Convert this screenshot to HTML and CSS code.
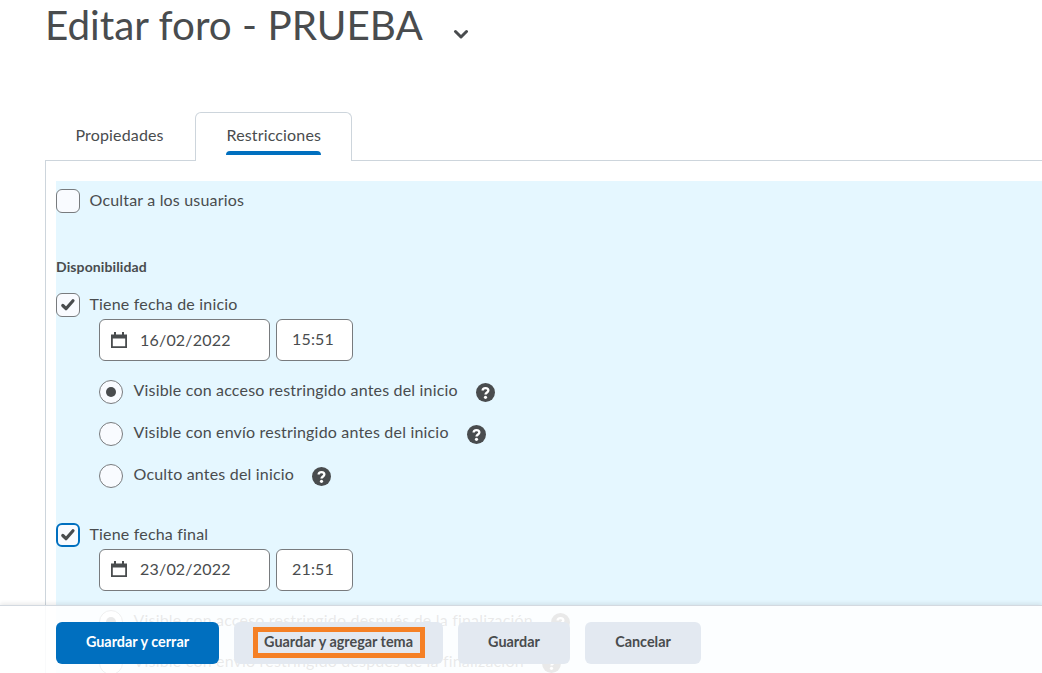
FILE: index.html
```html
<!DOCTYPE html>
<html lang="es">
<head>
<meta charset="utf-8">
<title>Editar foro - PRUEBA</title>
<link rel="stylesheet" href="styles.css">
</head>
<body>
<div class="page">
  <header class="head">
    <h1>Editar foro - PRUEBA</h1>
    <svg class="chev" width="16" height="10" viewBox="0 0 16 10"><path d="M2.500 2.500 8 8l5.500-5.500" fill="none" stroke="#494c4e" stroke-width="3" stroke-linecap="round" stroke-linejoin="round"/></svg>
  </header>
  <nav class="tabs">
    <div class="tab">Propiedades</div>
    <div class="tab active"><span>Restricciones</span><i></i></div>
  </nav>
  <main class="panel">
    <div class="blue">
      <label class="check first"><span class="box"></span>Ocultar a los usuarios</label>
      <h2>Disponibilidad</h2>
      <label class="check"><span class="box"><svg width="16" height="14" viewBox="0 0 16 14"><path d="M2.800 7.500 6 10.700l7-8" fill="none" stroke="#494c4e" stroke-width="3.200" stroke-linecap="round" stroke-linejoin="round"/></svg></span>Tiene fecha de inicio</label>
      <div class="dates">
        <div class="input date"><svg width="16" height="16" viewBox="0 0 16 16"><path d="M0 2.500h16V16H0z M1.800 6.500v7.700h12.400V6.500z" fill="#494c4e" fill-rule="evenodd"/><path d="M3 0h2v3H3zM11 0h2v3h-2z" fill="#494c4e"/></svg>16/02/2022</div>
        <div class="input time">15:51</div>
      </div>
      <div class="radios">
        <div class="radio"><span class="dot on"></span>Visible con acceso restringido antes del inicio<svg class="help" width="19" height="19" viewBox="0 0 18 18"><use href="#q"/></svg></div>
        <div class="radio"><span class="dot"></span>Visible con envío restringido antes del inicio<svg class="help" width="19" height="19" viewBox="0 0 18 18"><use href="#q"/></svg></div>
        <div class="radio last"><span class="dot"></span>Oculto antes del inicio<svg class="help" width="19" height="19" viewBox="0 0 18 18"><use href="#q"/></svg></div>
      </div>
      <label class="check second"><span class="box focus"><svg width="16" height="14" viewBox="0 0 16 14"><path d="M2.800 7.500 6 10.700l7-8" fill="none" stroke="#494c4e" stroke-width="3.200" stroke-linecap="round" stroke-linejoin="round"/></svg></span>Tiene fecha final</label>
      <div class="dates">
        <div class="input date"><svg width="16" height="16" viewBox="0 0 16 16"><path d="M0 2.500h16V16H0z M1.800 6.500v7.700h12.400V6.500z" fill="#494c4e" fill-rule="evenodd"/><path d="M3 0h2v3H3zM11 0h2v3h-2z" fill="#494c4e"/></svg>23/02/2022</div>
        <div class="input time">21:51</div>
      </div>
      <div class="radios">
        <div class="radio"><span class="dot on"></span>Visible con acceso restringido después de la finalización<svg class="help" width="19" height="19" viewBox="0 0 18 18"><use href="#q"/></svg></div>
        <div class="radio"><span class="dot"></span>Visible con envío restringido después de la finalización<svg class="help" width="19" height="19" viewBox="0 0 18 18"><use href="#q"/></svg></div>
      </div>
    </div>
  </main>
  <footer class="bar">
    <button class="btn primary">Guardar y cerrar</button>
    <button class="btn wide"><span class="mark"></span>Guardar y agregar tema</button>
    <button class="btn save">Guardar</button>
    <button class="btn cancel">Cancelar</button>
  </footer>
</div>
<svg class="defs" width="0" height="0"><defs><g id="q"><circle cx="9" cy="9" r="9" fill="#494c4e"/><path d="M6.300 7.200C6.300 5.700 7.500 4.800 9 4.800s2.700.9 2.700 2.300c0 1.900-2.700 2-2.700 3.900" fill="none" stroke="#fff" stroke-width="2.200"/><circle cx="9" cy="13.600" r="1.500" fill="#fff"/></g></defs></svg>
</body>
</html>
```
FILE: styles.css
```css
* { box-sizing: border-box; }
html, body { margin: 0; height: 100%; overflow: hidden; background: #fff; }
body { font-family: Lato, "Open Sans", sans-serif; color: #494c4e; }
.page { position: relative; width: 1042px; height: 673px; overflow: hidden; }
.defs { position: absolute; }

.head { display: flex; align-items: flex-start; height: 112px; padding-left: 45px; }
h1 { margin: 0; font-size: 40.400px; font-weight: 400; line-height: 49px; }
.chev { margin: 29px 0 0 30px; }

.tabs { display: flex; height: 49px; padding-left: 46px; margin-bottom: -1px; position: relative; z-index: 1; }
.tab { font-size: 16px; line-height: 20px; padding: 13px 30px 0 29.500px; width: 149px; letter-spacing: .15px; }
.tab.active { width: 157px; background: #fff; border: 1px solid #cdd5dc; border-bottom: 0; border-radius: 6px 6px 0 0; padding: 12px 30px 0 30.500px; }
.tab span { display: block; white-space: nowrap; }
.tab i { display: block; height: 4px; margin: 6px 0 0 -.5px; width: 95px; background: #006fbf; border-radius: 4px 4px 0 0; }

.panel { margin-left: 45px; padding: 20px 0 0 10px; border-top: 1px solid #cdd5dc; border-left: 1px solid #cdd5dc; height: 600px; }
.blue { background: #e5f7ff; height: 560px; padding-top: 8px; }

.check { display: flex; align-items: flex-start; font-size: 16px; line-height: 22px; letter-spacing: .18px; }
.box { flex: none; display: flex; align-items: center; justify-content: center; width: 24px; height: 24px; margin-right: 9.500px; background: #f9fbff; border: 1px solid #787b7e; border-radius: 6px; }
.box.focus { border: 2px solid #006fbf; }
h2 { margin: 44px 0 16px; font-size: 14px; line-height: 20px; font-weight: 700; letter-spacing: .12px; }

.dates { display: flex; gap: 6px; margin: 2px 0 0 43px; }
.input { height: 42px; background: #fff; border: 1px solid #787b7e; border-radius: 6px; font-size: 16px; line-height: 38px; letter-spacing: .2px; }
.date { display: flex; align-items: center; width: 171px; padding: 0 0 1px 11px; }
.date svg { margin-right: 13px; }
.time { width: 77px; text-align: center; padding-right: 3px; }

.radios { display: flex; flex-direction: column; gap: 17px; margin: 19px 0 0 43px; }
.radio { display: flex; align-items: flex-start; font-size: 16px; line-height: 20px; height: 24.500px; letter-spacing: .185px; }
.radio.last { margin-top: 1px; }
.dot { flex: none; display: flex; align-items: center; justify-content: center; width: 24px; height: 24px; margin-right: 10.500px; background: #f9fbff; border: 1px solid #787b7e; border-radius: 50%; }
.dot.on::after { content: ""; width: 10px; height: 10px; border-radius: 50%; background: #494c4e; }
.help { margin: 3px 0 0 18px; flex: none; }

.second { margin-top: 34px; }

.bar { position: absolute; left: 0; right: 0; top: 605px; height: 68px; display: flex; align-items: flex-start; gap: 15px; padding: 16px 0 0 56px; background: rgba(255,255,255,.88); border-top: 1px solid #d3d9e0; box-shadow: 0 -2px 4px rgba(0,0,0,.08); }
.btn { position: relative; height: 42px; border: 0; border-radius: 6px; background: #e3e9f1; color: #494c4e; font: 700 14.400px/40px Lato, sans-serif; padding: 0 0 2px; }
.primary { width: 163px; background: #006fbf; color: #fff; }
.wide { width: 209px; }
.save { width: 112px; }
.cancel { width: 116px; }
.mark { position: absolute; left: 19px; top: 5px; width: 172px; height: 31px; border: 5px solid #f58025; }
```
